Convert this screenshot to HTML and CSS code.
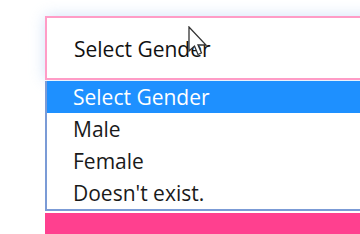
FILE: index.html
```html
<!DOCTYPE html>
<html>
<head>
<meta charset="utf-8">
<link rel="stylesheet" href="styles.css">
</head>
<body>
<div class="page">
  <div class="field">
    <div class="select">Select Gender</div>
    <ul class="list">
      <li class="opt active">Select Gender</li>
      <li class="opt">Male</li>
      <li class="opt">Female</li>
      <li class="opt">Doesn't exist.</li>
    </ul>
    <div class="button"></div>
  </div>
  <svg class="cursor" width="24" height="34" viewBox="0 0 24 34">
    <path d="M1 1 L1 25 L6.5 20 L10 28.5 L13.5 27 L10 19 L18 19 Z" fill="#fff" stroke="#333" stroke-width="1.3" stroke-linejoin="miter"/>
  </svg>
</div>
</body>
</html>
```
FILE: styles.css
```css
html, body {
  margin: 0;
  padding: 0;
  background: #fff;
}
.page {
  position: relative;
  width: 360px;
  height: 234px;
  overflow: hidden;
}
.field {
  display: flex;
  flex-direction: column;
  padding: 16px 0 0 45px;
  width: 340px;
  font-family: "Open Sans", "Noto Sans", sans-serif;
  font-size: 21px;
  color: #222;
}
.select {
  box-sizing: content-box;
  border: 2px solid #ff9cc6;
  border-right: none;
  padding: 2px 0 0 27px;
  height: 58px;
  display: flex;
  align-items: center;
  box-shadow: 0 0 14px rgba(150, 190, 240, 0.45);
  color: #111;
}
.list {
  list-style: none;
  margin: 1px 0 0 0;
  padding: 0;
  border-left: 2px solid #7b9bd6;
  border-bottom: 2px solid #7b9bd6;
  background: #fff;
}
.opt {
  height: 32px;
  line-height: 32px;
  padding-left: 26px;
  color: #1a1a1a;
}
.opt.active {
  background: #1e90ff;
  color: #fff;
}
.button {
  margin-top: 2px;
  height: 30px;
  background: #ff408f;
}
.cursor {
  position: absolute;
  left: 188px;
  top: 26px;
}
```
